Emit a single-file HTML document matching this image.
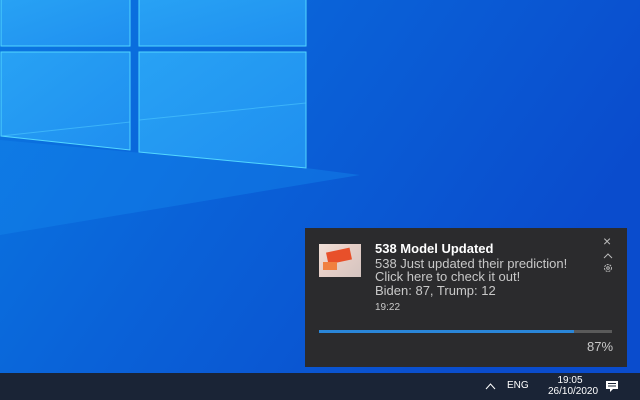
<!DOCTYPE html>
<html><head><meta charset="utf-8"><style>
*{margin:0;padding:0;box-sizing:border-box}
body{width:640px;height:400px;overflow:hidden;position:relative;font-family:"Liberation Sans",sans-serif;background:#0a56d6}
svg.bg{position:absolute;left:0;top:0}
.note{position:absolute;left:305px;top:228px;width:322px;height:139px;background:#2b2b2d;color:#fff}
.thumb{position:absolute;left:14px;top:16px;width:42px;height:33px;background:linear-gradient(135deg,#f0e0d8,#e8d0c8 40%,#d4c4c0);overflow:hidden}
.t{position:absolute;font-size:13px;line-height:14px;color:#c8c8c8;white-space:nowrap}
.bar{position:absolute;left:14px;top:102px;width:293px;height:3px;background:#5a5a5a}
.bar i{display:block;width:87%;height:100%;background:#2a86d8}
.tb{position:absolute;left:0;top:373px;width:640px;height:27px;background:#1a2436;color:#fff}
</style></head><body>
<svg class="bg" width="640" height="373" viewBox="0 0 640 373">
<defs>
<linearGradient id="g" x1="0" y1="0" x2="1" y2="0.4">
<stop offset="0" stop-color="#0b78e2"/><stop offset="0.45" stop-color="#0a62d8"/><stop offset="1" stop-color="#0a4ccd"/></linearGradient>
<linearGradient id="p" x1="0" y1="0" x2="1" y2="1">
<stop offset="0" stop-color="#28a2f4"/><stop offset="1" stop-color="#1f8ff0"/></linearGradient>
</defs>
<rect width="640" height="373" fill="url(#g)"/>
<polygon points="0,140 306,168 360,175 0,235" fill="#1584ea" opacity="0.45"/>
<g fill="url(#p)" stroke="#52d6ff" stroke-width="1">
<polygon points="1,-1 130,-1 130,46 1,46"/>
<polygon points="139,-1 306,-1 306,46 139,46"/>
<polygon points="1,52 130,52 130,150 1,136"/>
<polygon points="139,52 306,52 306,168 139,152"/>
</g>
<polyline points="1,136 130,122" stroke="#4cc8ff" fill="none" opacity="0.6"/>
<polyline points="139,120 306,103" stroke="#4cc8ff" fill="none" opacity="0.6"/>
</svg>
<div class="note">
<div class="thumb"><div style="position:absolute;left:8px;top:6px;width:24px;height:12px;background:#e8502a;transform:rotate(-12deg)"></div><div style="position:absolute;left:4px;top:18px;width:14px;height:8px;background:#f08040"></div></div>
<div class="t" style="left:70px;top:14px;color:#fff;font-weight:bold;font-size:13px">538 Model Updated</div>
<div class="t" style="left:70px;top:29px">538 Just updated their prediction!</div>
<div class="t" style="left:70px;top:42px">Click here to check it out!</div>
<div class="t" style="left:70px;top:56px">Biden: 87, Trump: 12</div>
<div class="t" style="left:70px;top:73px;font-size:10px">19:22</div>
<div class="t" style="left:298px;top:6px;font-size:14px;color:#bbb">×</div>
<svg style="position:absolute;left:298px;top:25px" width="10" height="6"><polyline points="1,5 5,1 9,5" stroke="#bbb" fill="none"/></svg>
<svg style="position:absolute;left:298px;top:35px" width="10" height="10"><circle cx="5" cy="5" r="3.5" stroke="#bbb" fill="none" stroke-dasharray="2 1"/><circle cx="5" cy="5" r="1.3" stroke="#bbb" fill="none"/></svg>
<div class="bar"><i></i></div>
<div class="t" style="left:282px;top:112px">87%</div>
</div>
<div class="tb">
<svg style="position:absolute;left:485px;top:10px" width="11" height="7"><polyline points="1,6 5.5,1 10,6" stroke="#fff" fill="none"/></svg>
<div style="position:absolute;left:507px;top:7px;font-size:10px">ENG</div>
<div style="position:absolute;left:548px;top:2px;width:44px;text-align:center;font-size:10px;line-height:11px">19:05<br>26/10/2020</div>
<svg style="position:absolute;left:605px;top:7px" width="14" height="13"><path d="M1,1H13V9H8L5,12V9H1Z" fill="#fff"/><path d="M3,3.5H11M3,6H11" stroke="#1a2436"/></svg>
</div>
</body></html>
